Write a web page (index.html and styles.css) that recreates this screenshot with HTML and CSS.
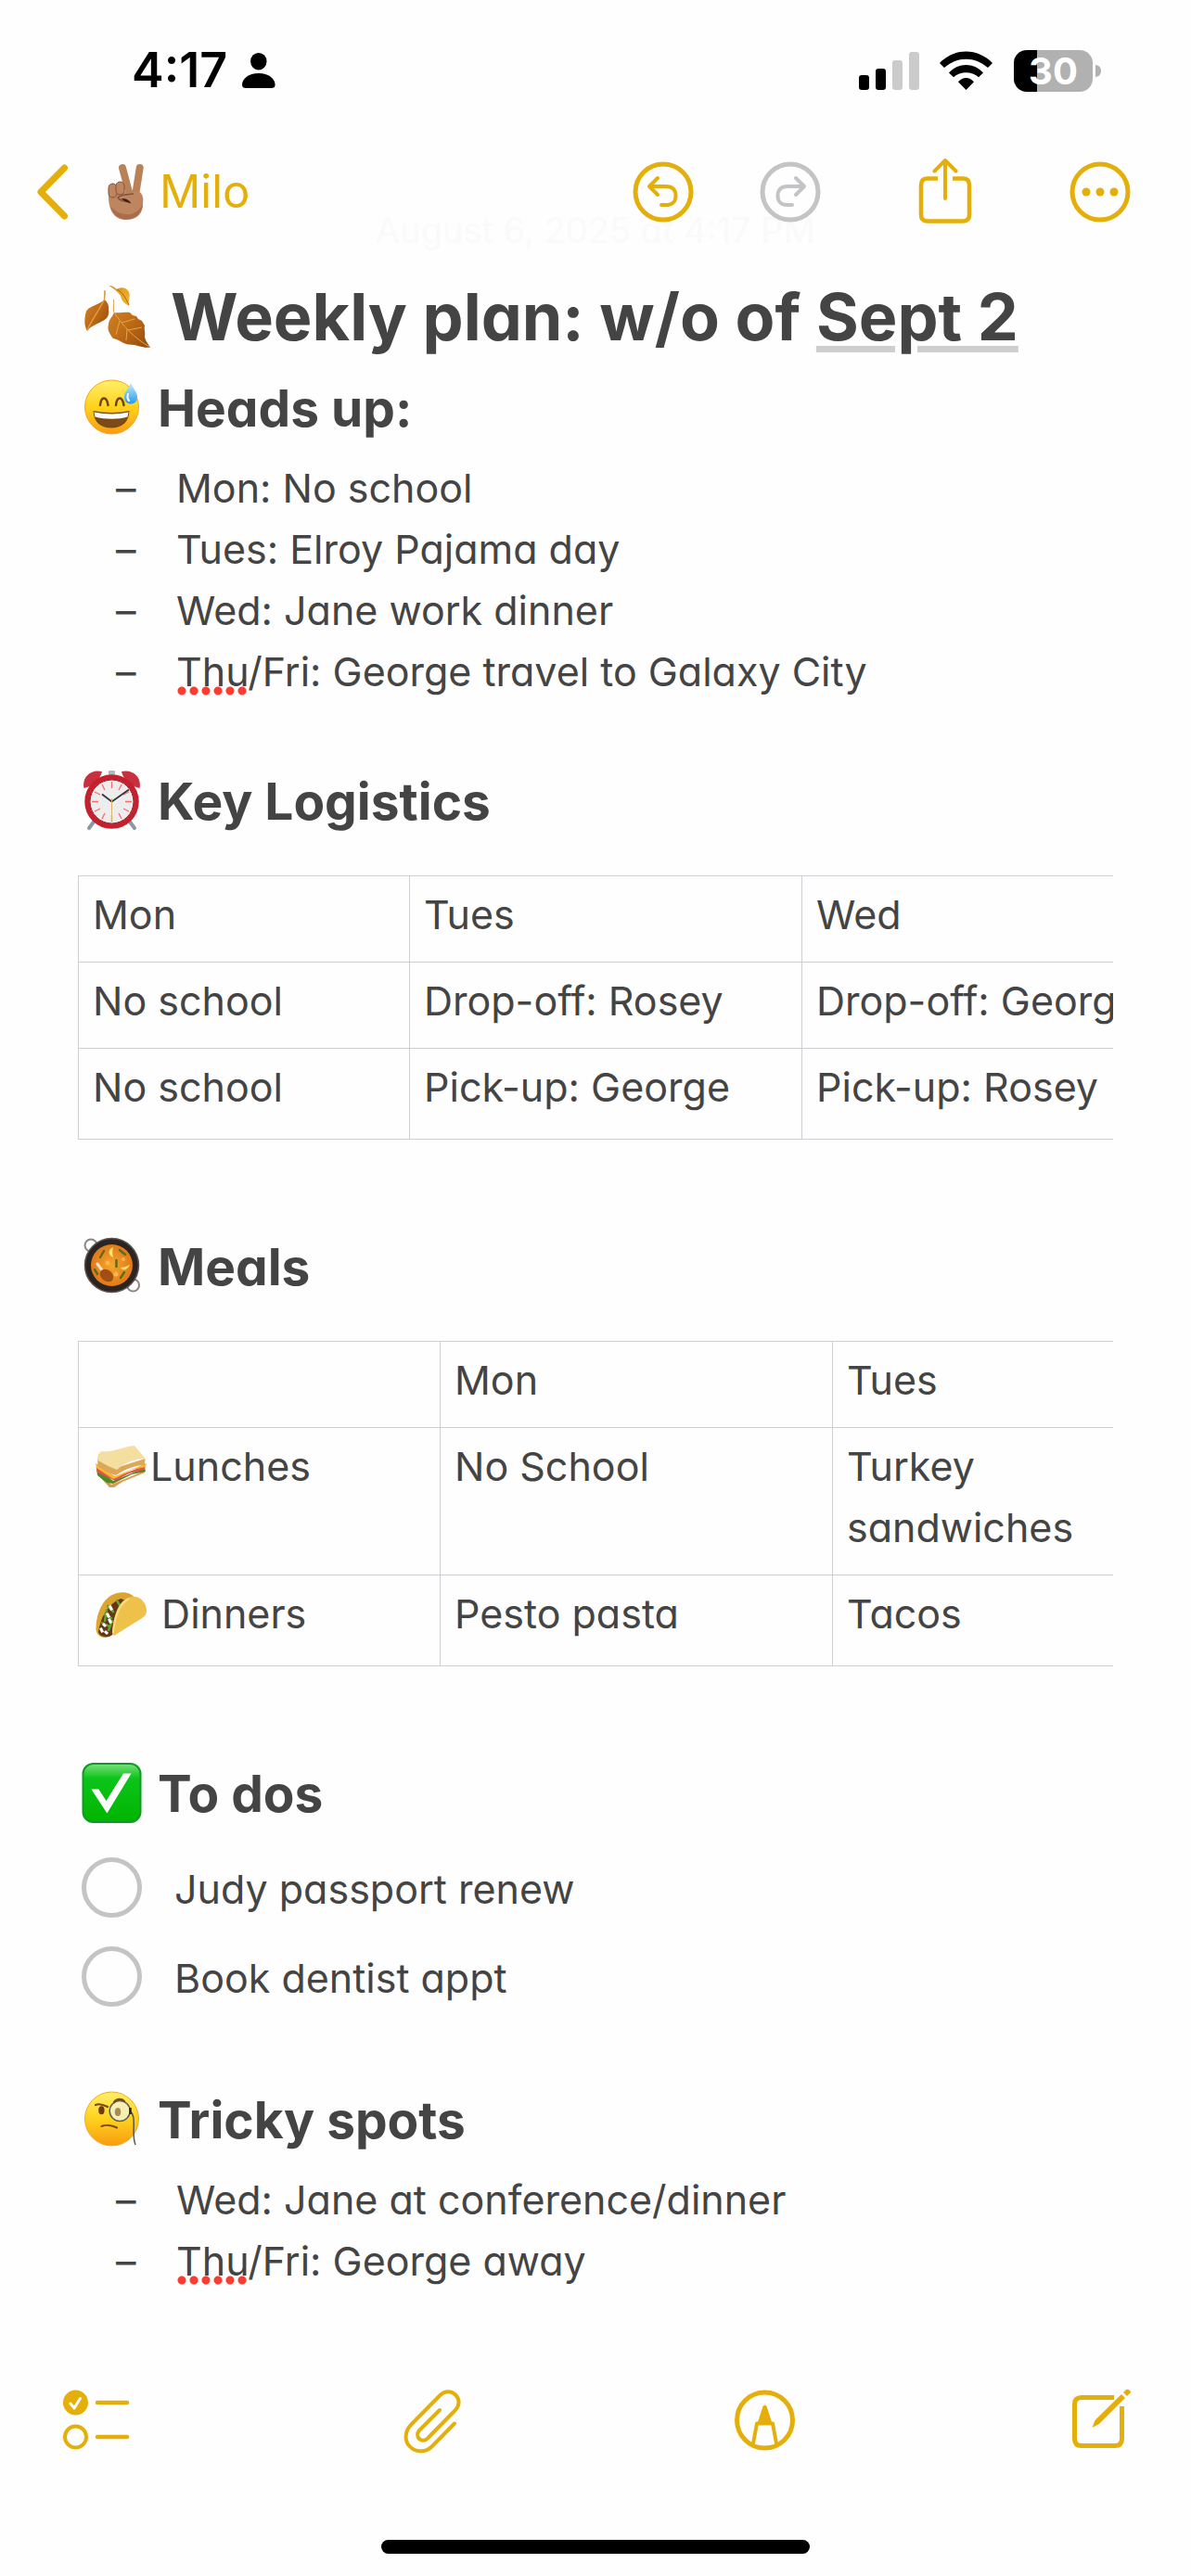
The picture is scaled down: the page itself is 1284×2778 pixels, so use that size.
FILE: index.html
```
<!DOCTYPE html>
<html lang="en">

<head>
    <meta charset="UTF-8">
    <meta name="viewport" content="width=device-width, initial-scale=1.0">
    <title>Milo - Weekly plan</title>
    <link rel="stylesheet" href="styles.css">
</head>

<body>
    <header>
        <div class="status-bar">
            <div class="status-left">
                <span class="time">4:17</span>
                <svg width="36" height="40" viewBox="0 0 36 40" aria-hidden="true">
                    <ellipse cx="17.8" cy="10.2" rx="8.7" ry="9.3" />
                    <path d="M4 39C1.5 39 0 38 0 35.5C0 29 7 23 17.8 23S35.6 29 35.6 35.5C35.6 38 34 39 31.6 39Z" />
                </svg>
            </div>
            <div class="status-right">
                <svg width="65" height="41" viewBox="0 0 65 41" aria-hidden="true">
                    <rect x="0" y="25" width="11" height="16" rx="3" />
                    <rect x="18" y="18" width="11" height="23" rx="3" />
                    <rect x="36" y="9" width="11" height="32" rx="3" fill="#cbcbcb" />
                    <rect x="54" y="0" width="11" height="41" rx="3" fill="#cbcbcb" />
                </svg>
                <svg width="58" height="43" viewBox="0 0 58 43" aria-hidden="true">
                    <path d="M0 13C16 -3.7 41 -3.7 57 13L52 18C38 5.5 19 5.5 5 18Z" />
                    <path d="M10 23.5C20.5 12.3 36.5 12.3 47 23.5L42 28.3C34.5 21.5 22.5 21.5 15 28.3Z" />
                    <path d="M20 33.3C25 27.6 32 27.6 37 33.3L28.5 42Z" />
                </svg>
                <div class="battery">
                    <span class="battery-level">30</span>
                    <span class="battery-tip"></span>
                </div>
            </div>
        </div>

        <nav>
            <p class="note-date">August 6, 2025 at 4:17 PM</p>
            <a href="#" class="back-link">
                <svg width="34" height="60" viewBox="0 0 34 60" aria-hidden="true">
                    <path class="line" stroke-width="7" d="M29.5 4L4 30L29.5 56" />
                </svg>
                <svg class="hand" width="48" height="64" viewBox="0 0 48 64" aria-hidden="true">
                    <path d="M20 6L28 36M38.7 6L34 36" fill="none" stroke="#b98157" stroke-width="8" stroke-linecap="round" />
                    <path d="M5 36C4 28 12 26 18 28L24 33L36 31C42 33 43 38 42 45C42 56 35 62 24 62C11 62 5 52 5 36Z" fill="#bd8560" />
                    <path d="M7 47C10 57 17 61.500 24 61.500C34 61.500 41 55 42 45C38 53 31 57 24 56C17 56 11 52 7 47Z" fill="#a96c4c" />
                    <rect x="5" y="23" width="9" height="15" rx="4.500" fill="#bd8560" stroke="#84513a" stroke-width="1" />
                    <rect x="13" y="21" width="9" height="14" rx="4.500" fill="#bd8560" stroke="#84513a" stroke-width="1" />
                    <path d="M15 38C20 34 26 35 32 34M15 38C18 43 23 41 29 44" fill="none" stroke="#84513a" stroke-width="1.500" />
                    <path d="M19 39C23 39 27 40 29 44C26 43 22 43 19 39Z" fill="#3d2018" />
                </svg>
                <span>Milo</span>
            </a>
            <div class="nav-actions">
                <div class="history">
                    <button aria-label="Undo">
                        <svg width="66" height="66" viewBox="0 0 66 66">
                            <circle class="line" cx="33" cy="33" r="30" stroke-width="5" />
                            <path class="line" stroke-width="4" d="M27 18L18 27L27 36M19 27H36C43 27 46.500 31 46.500 37S43 47 37 47H31" />
                        </svg>
                    </button>
                    <button aria-label="Redo" disabled>
                        <svg width="66" height="66" viewBox="0 0 66 66">
                            <circle class="line" cx="33" cy="33" r="30" stroke-width="5" />
                            <path class="line" stroke-width="4" d="M39 18L48 27L39 36M47 27H30C23 27 19.500 31 19.500 37S23 47 29 47H35" />
                        </svg>
                    </button>
                </div>
                <button aria-label="Share">
                    <svg width="66" height="72" viewBox="0 0 66 72">
                        <path class="line butt" stroke-width="4.500" d="M25 21.500H14Q7 21.500 7 28.500V60.500Q7 67.500 14 67.500H52Q59 67.500 59 60.500V28.500Q59 21.500 52 21.500H41" />
                        <path class="line" stroke-width="4" d="M33 43V2.500M21.500 13.500L33 2L44.500 13.500" />
                    </svg>
                </button>
                <button aria-label="More">
                    <svg width="66" height="66" viewBox="0 0 66 66">
                        <circle class="line" cx="33" cy="33" r="30" stroke-width="5" />
                        <circle cx="18" cy="33" r="4.500" />
                        <circle cx="33" cy="33" r="4.500" />
                        <circle cx="48" cy="33" r="4.500" />
                    </svg>
                </button>
            </div>
        </nav>
    </header>

    <main>
        <h1>
            <svg width="76" height="76" viewBox="0 0 76 76" aria-hidden="true">
                <defs>
                    <linearGradient id="leaf" x1="0" y1="0" x2="1" y2="1">
                        <stop offset="0" stop-color="#d08a2c" />
                        <stop offset="0.500" stop-color="#c06c16" />
                        <stop offset="1" stop-color="#93480c" />
                    </linearGradient>
                    <linearGradient id="leafLight" x1="0" y1="0" x2="1" y2="1">
                        <stop offset="0" stop-color="#d98c2b" />
                        <stop offset="1" stop-color="#f0b92a" />
                    </linearGradient>
                </defs>
                <path d="M25 9C26 12 25 15 24.600 19C27 21 30 25 29 30C30 34 28 38 27 39C21 45 12 45 6 53C3 48 3 42 3.700 38C4 34 5 32 5.300 31C10 25 19 25 24.600 19Z" fill="url(#leaf)" />
                <path d="M25 9L24.600 19C19 30 11 41 6 52" fill="none" stroke="#de9c45" stroke-width="1.500" />
                <path d="M29.300 3.700C33 4 36 6 38 8C42 5 49 6 51 11C53 16 50 20 51 25.500C46 24 43 20 42 15C40 12 37 9 29.300 3.700Z" fill="url(#leafLight)" />
                <path d="M38 8C44 11 48 18 51 25" fill="none" stroke="#a9631c" stroke-width="1" />
                <path d="M34.500 19C36 24 33 28 35 33C41 34 47 32 52 33L55 36L59 37L61 40L65 42L68 47C67 51 69 54 68 59C69 64 71 66 74 70.500C66 72 59 67 50 67.500C43 66 40 62 34 61C31 57 27 52 29 46C29 41 33 38 35 33Z" fill="url(#leaf)" />
                <path d="M34.500 19C35 24 34 28 34.500 32C44 47 57 61 74 70.500M43 44L57 40M50 52L65 49M41 42L37 57M49 51L48 63" fill="none" stroke="#e5a54b" stroke-width="1" />
            </svg>
            <span>Weekly plan: w/o of <a href="#">Sept 2</a></span>
        </h1>

        <section>
            <h2>
                <svg width="66" height="66" viewBox="0 0 66 66" aria-hidden="true">
                    <defs>
                        <linearGradient id="face" x1="0" y1="0" x2="0" y2="1">
                            <stop offset="0" stop-color="#fff06a" />
                            <stop offset="0.500" stop-color="#ffd21c" />
                            <stop offset="1" stop-color="#f99b12" />
                        </linearGradient>
                        <linearGradient id="drop" x1="0" y1="0" x2="0" y2="1">
                            <stop offset="0" stop-color="#c9efff" />
                            <stop offset="1" stop-color="#249ce8" />
                        </linearGradient>
                    </defs>
                    <circle cx="32.500" cy="32" r="29" fill="url(#face)" stroke="#f3a81c" stroke-width="1" />
                    <path d="M20 30C21 20 27 20 28.500 30M37 30C38 20 44 20 45.500 30" fill="none" stroke="#6e4410" stroke-width="2.500" stroke-linecap="round" />
                    <path d="M12.500 36C25 38.500 40 38.500 51.500 36C51 48 44 54.500 32 54.500S13 48 12.500 36Z" fill="#7c4a14" />
                    <path d="M13.500 37.500C26 40 39 40 50.500 37.500L49.500 42.500C40 45.500 25 45.500 14.500 42.500Z" fill="#fff" />
                    <path d="M53 5.500C55 12 60 15 60 21C60 26 57 28.500 53 28.500S46 26 46 21C46 15 51 12 53 5.500Z" fill="url(#drop)" />
                    <path d="M50 18C49 21 49.500 23.500 51 25" fill="none" stroke="#fff" stroke-width="2" stroke-linecap="round" />
                </svg>
                Heads up:
            </h2>
            <ul>
                <li>Mon: No school</li>
                <li>Tues: Elroy Pajama day</li>
                <li>Wed: Jane work dinner</li>
                <li><span class="typo">Thu</span>/Fri: George travel to Galaxy City</li>
            </ul>
        </section>

        <section>
            <h2>
                <svg width="66" height="66" viewBox="0 0 66 66" aria-hidden="true">
                    <path d="M14 54L8 62M51 54L57 62" stroke="#8b97a4" stroke-width="4" stroke-linecap="round" />
                    <rect x="29" y="0" width="7" height="5" rx="1" fill="#aeb8c2" />
                    <path d="M2.500 19C0 8 9 -2 22 1C20 10 12 17 2.500 19Z" fill="#c9303f" />
                    <path d="M62.500 19C65 8 56 -2 43 1C45 10 53 17 62.500 19Z" fill="#c9303f" />
                    <circle cx="32.500" cy="33.500" r="26.500" fill="#ededed" stroke="#c4202d" stroke-width="5.500" />
                    <circle cx="32.500" cy="33.500" r="23.500" fill="none" stroke="#8e1a25" stroke-width="1" />
                    <path d="M32.500 12V19M32.500 48V55M11 33.500H18M47 33.500H54M22 15L25 21M43 15L40 21M22 52L25 46M43 52L40 46M14 23L20 26M51 23L45 26M14 44L20 41M51 44L45 41" stroke="#ff6a6a" stroke-width="1.300" />
                    <path d="M32.500 33.500L22 25.500M32.500 33.500L51 20.500" stroke="#33383d" stroke-width="1.800" />
                    <path d="M32.500 30V54" stroke="#d7b56c" stroke-width="1" />
                </svg>
                Key Logistics
            </h2>
            <div class="table-scroll">
                <table class="logistics">
                    <tr>
                        <th scope="col">Mon</th>
                        <th scope="col">Tues</th>
                        <th scope="col">Wed</th>
                    </tr>
                    <tr>
                        <td>No school</td>
                        <td>Drop-off: Rosey</td>
                        <td>Drop-off: George</td>
                    </tr>
                    <tr>
                        <td>No school</td>
                        <td>Pick-up: George</td>
                        <td>Pick-up: Rosey</td>
                    </tr>
                </table>
            </div>
        </section>

        <section>
            <h2>
                <svg width="66" height="66" viewBox="0 0 66 66" aria-hidden="true">
                    <defs>
                        <radialGradient id="curry">
                            <stop offset="0" stop-color="#f5a62c" />
                            <stop offset="1" stop-color="#e07a1a" />
                        </radialGradient>
                    </defs>
                    <circle cx="10" cy="10" r="6.500" fill="none" stroke="#8a8583" stroke-width="2" />
                    <circle cx="55.500" cy="53" r="6.500" fill="none" stroke="#8a8583" stroke-width="2" />
                    <circle cx="32.500" cy="31.500" r="29" fill="#2c2421" stroke="#5b5350" stroke-width="1.500" />
                    <circle cx="32.500" cy="31.500" r="22.500" fill="url(#curry)" />
                    <path d="M34 12C28 15 28 20 34 23C33 19 33 15 34 12ZM42 34C44 38 49 37 52 31C48 33 45 34 42 34Z" fill="#ffe375" />
                    <path d="M24 16L20 23M41 15L47 20M37.500 26V33M46 39L42 45M14 36L17 41" stroke="#5f6d18" stroke-width="2.500" stroke-linecap="round" />
                    <path d="M17 30L23 38" stroke="#f6dfc0" stroke-width="3" stroke-linecap="round" />
                    <ellipse cx="27" cy="42.500" rx="8" ry="6" fill="#a14f14" transform="rotate(38 27 42.500)" />
                    <circle cx="28" cy="29" r="2.500" fill="#f9b552" />
                    <circle cx="37" cy="41" r="2.500" fill="#f9b552" />
                    <circle cx="45" cy="25" r="2" fill="#f9b552" />
                </svg>
                Meals
            </h2>
            <div class="table-scroll">
                <table class="meals">
                    <tr>
                        <td></td>
                        <th scope="col">Mon</th>
                        <th scope="col">Tues</th>
                    </tr>
                    <tr>
                        <th scope="row"><svg width="62" height="56" viewBox="-2 0 62 56" aria-hidden="true">
                                <path d="M3 30L18 46L54 31V33L30 43L21 49L16 49L5 37Z" fill="#e0994a" />
                                <path d="M2 29L20 42L54 28L55 32L40 35L30 40L20 45L13 44L3 36Z" fill="#4f8a24" />
                                <path d="M1.500 27L20 39L55 25L54 30L37 34L22 42L3 33Z" fill="#e0564c" />
                                <path d="M1 23L22 37L56 23L55 27L40 30L24 38.500L20 40L2 28Z" fill="#fdb52f" />
                                <path d="M4 13L23 28L54.500 18L54 25C43 25 34 29 23 36C16 34 9 30 3 26Z" fill="#dda75a" />
                                <path d="M8 10C18 12 31 5 43 4L54.700 18C44 18 33 22 24 30C17 27 10 24 4 20C3 16 4 12 8 10Z" fill="#f5dfa0" />
                            </svg>Lunches</th>
                        <td>No School</td>
                        <td>Turkey sandwiches</td>
                    </tr>
                    <tr>
                        <th scope="row"><svg width="62" height="56" viewBox="-2 0 62 56" aria-hidden="true">
                                <path d="M1.500 44C1 28 8 8 24 4C33 2 40 4 44 10L20 48C15 54 4 54 1.500 44Z" fill="#dca531" />
                                <path d="M4 46C6 34 11 18 28 10L34 12L20 48C15 53 6 52 4 46Z" fill="#663618" />
                                <path d="M14 18L20 24M11 27L18 31M24 12L27 17M8 36L16 40M13 22L11 34M19 34L15 44" stroke="#62a531" stroke-width="2.500" stroke-linecap="round" />
                                <path d="M17 19L18 21M14 27L15 29M10 38L11 39M16 33L17 35M7 43L8 45M12 46L13 47" stroke="#fff" stroke-width="3" stroke-linecap="square" />
                                <path d="M19 48C20 32 24 14 36 9C46 5 55 12 56 22C56 28 54 29 48 33L24 48C22 50 19 50 19 48Z" fill="#eec14a" />
                                <path d="M20 47C21 32 26 16 37 10" fill="none" stroke="#f8dc7e" stroke-width="2" />
                            </svg> Dinners</th>
                        <td>Pesto pasta</td>
                        <td>Tacos</td>
                    </tr>
                </table>
            </div>
        </section>

        <section>
            <h2>
                <svg width="66" height="66" viewBox="0 0 66 66" aria-hidden="true">
                    <defs>
                        <linearGradient id="check" x1="0" y1="0" x2="0" y2="1">
                            <stop offset="0" stop-color="#7be07c" />
                            <stop offset="0.250" stop-color="#0cc41a" />
                            <stop offset="1" stop-color="#00b400" />
                        </linearGradient>
                    </defs>
                    <rect x="1.500" y="1" width="62" height="63" rx="11" fill="url(#check)" stroke="#0e9b22" stroke-width="2" />
                    <path d="M10.400 28.400H18.300L26.600 41L45 11.500H53.500L27.400 54.400Z" fill="#fff" />
                </svg>
                To dos
            </h2>
            <div class="todo">
                <input type="checkbox" id="todo-passport">
                <label for="todo-passport">Judy passport renew</label>
            </div>
            <div class="todo">
                <input type="checkbox" id="todo-dentist">
                <label for="todo-dentist">Book dentist appt</label>
            </div>
        </section>

        <section>
            <h2>
                <svg width="66" height="66" viewBox="0 0 66 66" aria-hidden="true">
                    <circle cx="32.500" cy="32" r="29" fill="url(#face)" stroke="#f3a81c" stroke-width="1" />
                    <ellipse cx="21.400" cy="22.700" rx="3.200" ry="4.500" fill="#6b3d0c" />
                    <circle cx="41.200" cy="23.500" r="11" fill="#f6efb4" stroke="#5d6060" stroke-width="1.500" />
                    <ellipse cx="39" cy="24.500" rx="3.200" ry="4.500" fill="#a98b56" />
                    <path d="M15 17C19 15 24 17 28 19M35 14C38 10 43 10 46 13" fill="none" stroke="#7c4710" stroke-width="2.200" stroke-linecap="round" />
                    <path d="M21.500 40C26 38 33 39 38 41.500" fill="none" stroke="#7c4710" stroke-width="2" stroke-linecap="round" />
                    <path d="M52.500 24C60 30 53 48 58 60" fill="none" stroke="#55585b" stroke-width="1.500" />
                    <path d="M52.500 20V27" stroke="#222" stroke-width="2.500" />
                </svg>
                Tricky spots
            </h2>
            <ul>
                <li>Wed: Jane at conference/dinner</li>
                <li><span class="typo">Thu</span>/Fri: George away</li>
            </ul>
        </section>
    </main>

    <footer>
        <div class="toolbar">
            <button aria-label="Checklist">
                <svg width="72" height="72" viewBox="0 0 72 72">
                    <circle cx="13.500" cy="17" r="13.500" />
                    <path d="M8 18L12 23L18.500 12.500" fill="none" stroke="#fff" stroke-width="3" stroke-linecap="round" stroke-linejoin="round" />
                    <circle class="line" cx="13.500" cy="54" r="11.500" stroke-width="4" />
                    <path class="line" stroke-width="4.500" d="M37 17H69M37 54H69" />
                </svg>
            </button>
            <button aria-label="Attach">
                <svg width="72" height="72" viewBox="0 0 72 72">
                    <path class="line" stroke-width="4" d="M62 39.500L37.500 64.500C30 72 19 70 13.500 64C8 58 8 48 15.500 40.500L46.500 9C52 3.500 59 4.500 63 8.500C67.500 13 68 19.500 63 25L33.500 55C30.500 58.500 26.500 58.500 24 56C21.500 53.500 21.500 50 24 47L46 25" />
                </svg>
            </button>
            <button aria-label="Markup">
                <svg width="72" height="72" viewBox="0 0 72 72">
                    <circle class="line" cx="36.500" cy="36" r="30" stroke-width="5" />
                    <path d="M29 41V38L34.500 21Q36.500 18.500 38.500 21L44 38V41Z" />
                    <path class="line" stroke-width="4" d="M24 61L28 39.500H45L49 61" />
                </svg>
            </button>
            <button aria-label="New note">
                <svg width="72" height="72" viewBox="0 0 72 72">
                    <path class="line butt" stroke-width="5" d="M53 11.500H18Q10.500 11.500 10.500 19V56Q10.500 63.500 18 63.500H54Q61.500 63.500 61.500 56V21" />
                    <path d="M61 8L65 12L37 40L29.500 44L32.500 36Z" />
                    <path d="M63 6L66 3Q68 2 70 4T70 7L67 10Z" />
                </svg>
            </button>
        </div>
        <div class="home-bar"></div>
    </footer>
</body>

</html>
```

FILE: styles.css
```
/* General styles */
* {
    margin: 0;
    padding: 0;
    box-sizing: border-box;
}

body {
    font-family: 'Inter', 'Liberation Sans', sans-serif;
    font-feature-settings: "cv11";
    font-size: 43px;
    line-height: 66px;
    color: #444;
    background-color: #fefefe;
    min-height: 100vh;
    display: flex;
    flex-direction: column;
}

svg {
    display: block;
    flex-shrink: 0;
    fill: currentColor;
}

.line {
    fill: none;
    stroke: currentColor;
    stroke-linecap: round;
    stroke-linejoin: round;
}

.butt {
    stroke-linecap: butt;
}

button {
    display: block;
    background: none;
    border: none;
    color: #e4af0a;
    cursor: pointer;
}

button:disabled {
    color: #c4c4c6;
}

/* Status bar */
.status-bar {
    display: flex;
    justify-content: space-between;
    align-items: center;
    height: 130px;
    padding: 22px 106px 0 142px;
    color: #000;
}

.status-left {
    display: flex;
    align-items: center;
    gap: 16px;
}

.time {
    font-size: 52px;
    font-weight: 600;
}

.status-right {
    display: flex;
    align-items: center;
    gap: 22px;
}

.battery {
    position: relative;
    width: 85px;
    height: 45px;
    border-radius: 14px;
    background: linear-gradient(to right, #000 30%, #b1b1b1 30%);
    color: #fff;
    font-size: 40px;
    font-weight: 700;
    line-height: 45px;
    text-align: center;
}

.battery-tip {
    position: absolute;
    top: 16px;
    right: -9px;
    width: 6px;
    height: 13px;
    border-radius: 0 6px 6px 0;
    background-color: #b1b1b1;
}

/* Navigation */
nav {
    position: relative;
    display: flex;
    justify-content: space-between;
    align-items: center;
    height: 153px;
    padding: 0 65px 0 40px;
}

.note-date {
    position: absolute;
    bottom: 2px;
    left: 0;
    width: 100%;
    text-align: center;
    font-size: 38px;
    color: #fafafa;
}

.back-link,
.nav-actions {
    position: relative;
    display: flex;
    align-items: center;
}

.back-link {
    color: #e4af0a;
    font-size: 49px;
    text-decoration: none;
}

.hand {
    margin: 0 12px 0 38px;
}

.nav-actions {
    gap: 101px;
}

.history {
    display: flex;
    gap: 71px;
}

/* Note content */
main {
    flex: 1;
    padding: 15px 84px 0;
}

h1,
h2 {
    display: flex;
    align-items: center;
    padding-left: 4px;
    font-weight: 700;
    white-space: nowrap;
}

h1 {
    gap: 20px;
    margin-bottom: 18px;
    font-size: 70px;
    line-height: 88px;
}

h1 a {
    color: inherit;
    text-decoration: underline;
    text-decoration-color: #cecece;
    text-decoration-thickness: 7px;
    text-underline-offset: 6px;
}

h2 {
    gap: 16px;
    margin-bottom: 17px;
    font-size: 55px;
    line-height: 72px;
}

section + section {
    margin-top: 71px;
}

ul {
    list-style-type: none;
}

li {
    padding-left: 41px;
}

li::before {
    content: "–";
    display: inline-block;
    width: 65px;
}

.typo {
    background-image: radial-gradient(circle, #ff3b30 4px, transparent 5px);
    background-size: 12px 10px;
    background-position: left bottom;
    background-repeat: space no-repeat;
}

/* Tables */
.table-scroll {
    margin-top: 44px;
    margin-bottom: 101px;
    overflow: hidden;
}

table {
    width: 1203px;
    table-layout: fixed;
    border-collapse: collapse;
}

.meals {
    width: 1236px;
}

th,
td {
    width: 423px;
    padding: 8px 15px 18px;
    border: 1px solid #cfcfd3;
    font-weight: 400;
    text-align: left;
    vertical-align: top;
}

.logistics th:first-child {
    width: 357px;
}

.meals td:first-child {
    width: 390px;
}

tr:last-child th,
tr:last-child td {
    padding-bottom: 23px;
}

th svg {
    display: inline-block;
    vertical-align: -14px;
}

/* To dos */
.todo {
    display: flex;
    align-items: center;
    gap: 35px;
    height: 96px;
    padding-left: 4px;
}

.todo input {
    appearance: none;
    width: 65px;
    height: 65px;
    border: 5px solid #c4c4c6;
    border-radius: 50%;
}

.todo input:checked {
    background-color: #e4af0a;
    border-color: #e4af0a;
}

.todo label {
    padding-top: 4px;
}

/* Bottom toolbar */
footer {
    padding-bottom: 24px;
}

.toolbar {
    display: flex;
    justify-content: space-between;
    padding: 0 64px 93px 68px;
}

.home-bar {
    width: 36%;
    height: 15px;
    margin: 0 auto;
    border-radius: 8px;
    background-color: #000;
}
```
